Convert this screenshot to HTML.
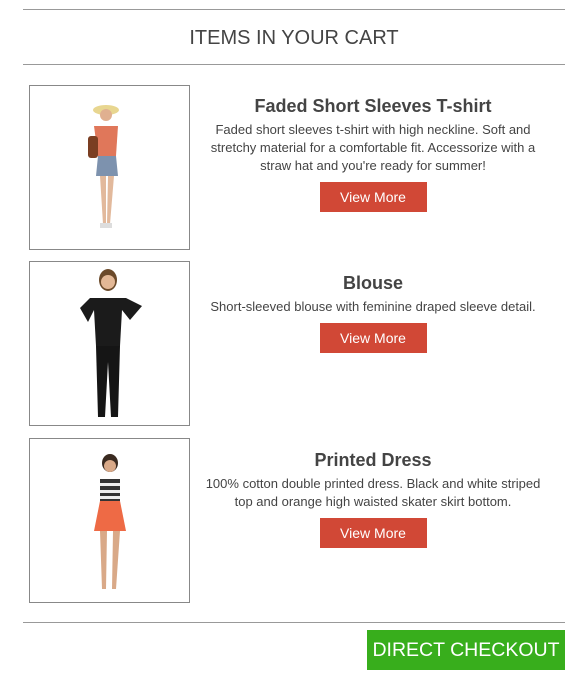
<!DOCTYPE html>
<html><head><meta charset="utf-8"><style>
*{margin:0;padding:0;box-sizing:border-box}
body{width:588px;height:681px;background:#fff;font-family:"Liberation Sans",sans-serif;color:#444;position:relative;overflow:hidden}
.hr{position:absolute;left:23px;width:542px;height:0;border-top:1px solid #999}
h1{position:absolute;top:27px;left:23px;width:542px;text-align:center;font-weight:normal;font-size:20px;color:#444}
.box{position:absolute;left:29px;width:161px;height:165px;border:1px solid #888;background:#fff}
.box svg{position:absolute;left:0;top:0}
.info{position:absolute;left:200px;width:346px;text-align:center}
.info h2{font-size:18px;font-weight:bold;color:#444;line-height:22px}
.info p{font-size:13px;line-height:18px;color:#444;margin-top:4px}
.btn{display:inline-block;width:107px;height:30px;line-height:30px;background:#d14836;color:#fff;font-size:14px;margin-top:7px}
.co{position:absolute;left:367px;top:630px;width:198px;height:40px;background:#38ae1c;color:#fff;font-size:19.5px;line-height:40px;text-align:center}
</style></head><body>
<div class="hr" style="top:9px"></div>
<h1>ITEMS IN YOUR CART</h1>
<div class="hr" style="top:64px"></div>

<div class="box" style="top:85px"><svg width="161" height="165">
<ellipse cx="76" cy="24" rx="13" ry="5" fill="#e8d690"/><circle cx="76" cy="29" r="6" fill="#e0b090"/>
<path d="M64 40 L88 40 L86 70 L68 70Z" fill="#e0775a"/><rect x="58" y="50" width="10" height="22" rx="3" fill="#7a3e22"/>
<path d="M68 70 L86 70 L88 90 L66 90Z" fill="#7d92ae"/>
<path d="M70 90 L76 90 L76 138 L73 138Z M78 90 L84 90 L80 138 L77 138Z" fill="#e2b99c"/>
<rect x="70" y="137" width="12" height="5" fill="#ddd"/></svg></div>
<div class="info" style="top:95px"><h2>Faded Short Sleeves T-shirt</h2><p>Faded short sleeves t-shirt with high neckline. Soft and stretchy material for a comfortable fit. Accessorize with a straw hat and you're ready for summer!</p><span class="btn">View More</span></div>

<div class="box" style="top:261px"><svg width="161" height="165">
<ellipse cx="78" cy="18" rx="9" ry="11" fill="#6b4a2a"/><circle cx="78" cy="20" r="7" fill="#e3b896"/>
<path d="M60 36 L96 36 L112 44 L100 58 L92 48 L90 84 L66 84 L64 48 L58 60 L50 46Z" fill="#1b1b1b"/>
<path d="M66 84 L90 84 L88 155 L81 155 L78 100 L75 155 L68 155Z" fill="#151515"/></svg></div>
<div class="info" style="top:272px"><h2>Blouse</h2><p>Short-sleeved blouse with feminine draped sleeve detail.</p><span class="btn">View More</span></div>

<div class="box" style="top:438px"><svg width="161" height="165">
<ellipse cx="80" cy="24" rx="8" ry="9" fill="#3a2a20"/><circle cx="80" cy="27" r="6" fill="#d9a988"/>
<rect x="70" y="40" width="20" height="22" fill="#333"/><rect x="70" y="44" width="20" height="3" fill="#eee"/><rect x="70" y="51" width="20" height="3" fill="#eee"/><rect x="70" y="57" width="20" height="3" fill="#eee"/>
<path d="M70 62 L90 62 L96 92 L64 92Z" fill="#ee6a45"/>
<path d="M70 92 L77 92 L76 150 L72 150Z M83 92 L90 92 L86 150 L82 150Z" fill="#d9a988"/></svg></div>
<div class="info" style="top:449px"><h2>Printed Dress</h2><p>100% cotton double printed dress. Black and white striped top and orange high waisted skater skirt bottom.</p><span class="btn">View More</span></div>

<div class="hr" style="top:622px"></div>
<div class="co">DIRECT CHECKOUT</div>
</body></html>
